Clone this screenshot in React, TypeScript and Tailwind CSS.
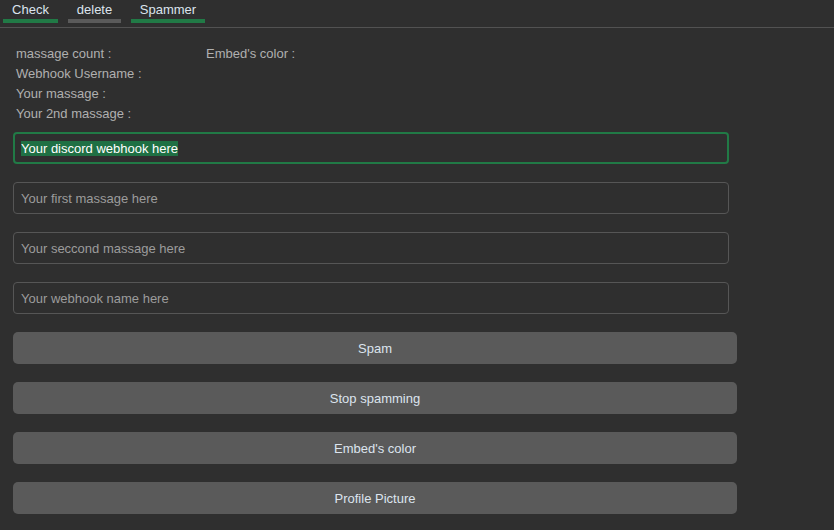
import { useEffect, useRef } from "react";

const tabs = [
  { label: "Check", width: "w-[55px]", bar: "bg-[#217a46]" },
  { label: "delete", width: "w-[53px]", bar: "bg-[#5a5a5a]" },
  { label: "Spammer", width: "w-[74px]", bar: "bg-[#217a46]" },
];

const inputs = [
  "Your first massage here",
  "Your seccond massage here",
  "Your webhook name here",
];

const buttons = ["Spam", "Stop spamming", "Embed's color", "Profile Picture"];

export default function App() {
  const hookRef = useRef<HTMLInputElement>(null);

  useEffect(() => {
    const el = hookRef.current;
    if (el) {
      el.focus();
      el.setSelectionRange(0, el.value.length);
    }
  }, []);

  return (
    <div className="w-[834px] h-[530px] overflow-hidden bg-[#2f2f2f] text-[13px] font-['Liberation_Sans',Arial,sans-serif]">
      {/* tab strip */}
      <div className="flex gap-[10px] pl-[3px] h-[28px] border-b border-[#525252]">
        {tabs.map((t) => (
          <div key={t.label} className={`flex flex-col items-center ${t.width}`}>
            <span className="h-[19px] leading-[19px] text-[#dce4ee]">{t.label}</span>
            <span className={`h-[4px] w-full ${t.bar}`} />
          </div>
        ))}
      </div>

      {/* stats */}
      <div className="grid grid-cols-[190px_1fr] pl-[16px] pt-[16px] leading-[20px] text-[#b0b0b0]">
        <span>massage count :</span>
        <span>Embed's color :</span>
        <span>Webhook Username :</span>
        <span />
        <span>Your massage :</span>
        <span />
        <span>Your 2nd massage :</span>
        <span />
      </div>

      <div className="flex flex-col gap-[18px] pl-[13px] pt-[8px]">
        <input
          ref={hookRef}
          defaultValue="Your discord webhook here"
          className="w-[716px] h-[32px] rounded-[4px] border-2 border-[#217a46] bg-transparent px-[6px] text-[#eef2f5] outline-none selection:bg-[#1f7044] selection:text-white caret-white"
        />
        {inputs.map((p) => (
          <input
            key={p}
            placeholder={p}
            className="w-[716px] h-[32px] rounded-[4px] border border-[#565656] bg-transparent px-[7px] text-[#dce4ee] placeholder:text-[#9c9c9c] outline-none"
          />
        ))}
        {buttons.map((b) => (
          <button
            key={b}
            className="w-[724px] h-[32px] pt-[1px] rounded-[5px] bg-[#5a5a5a] text-[#dce4ee] text-center"
          >
            {b}
          </button>
        ))}
      </div>
    </div>
  );
}
